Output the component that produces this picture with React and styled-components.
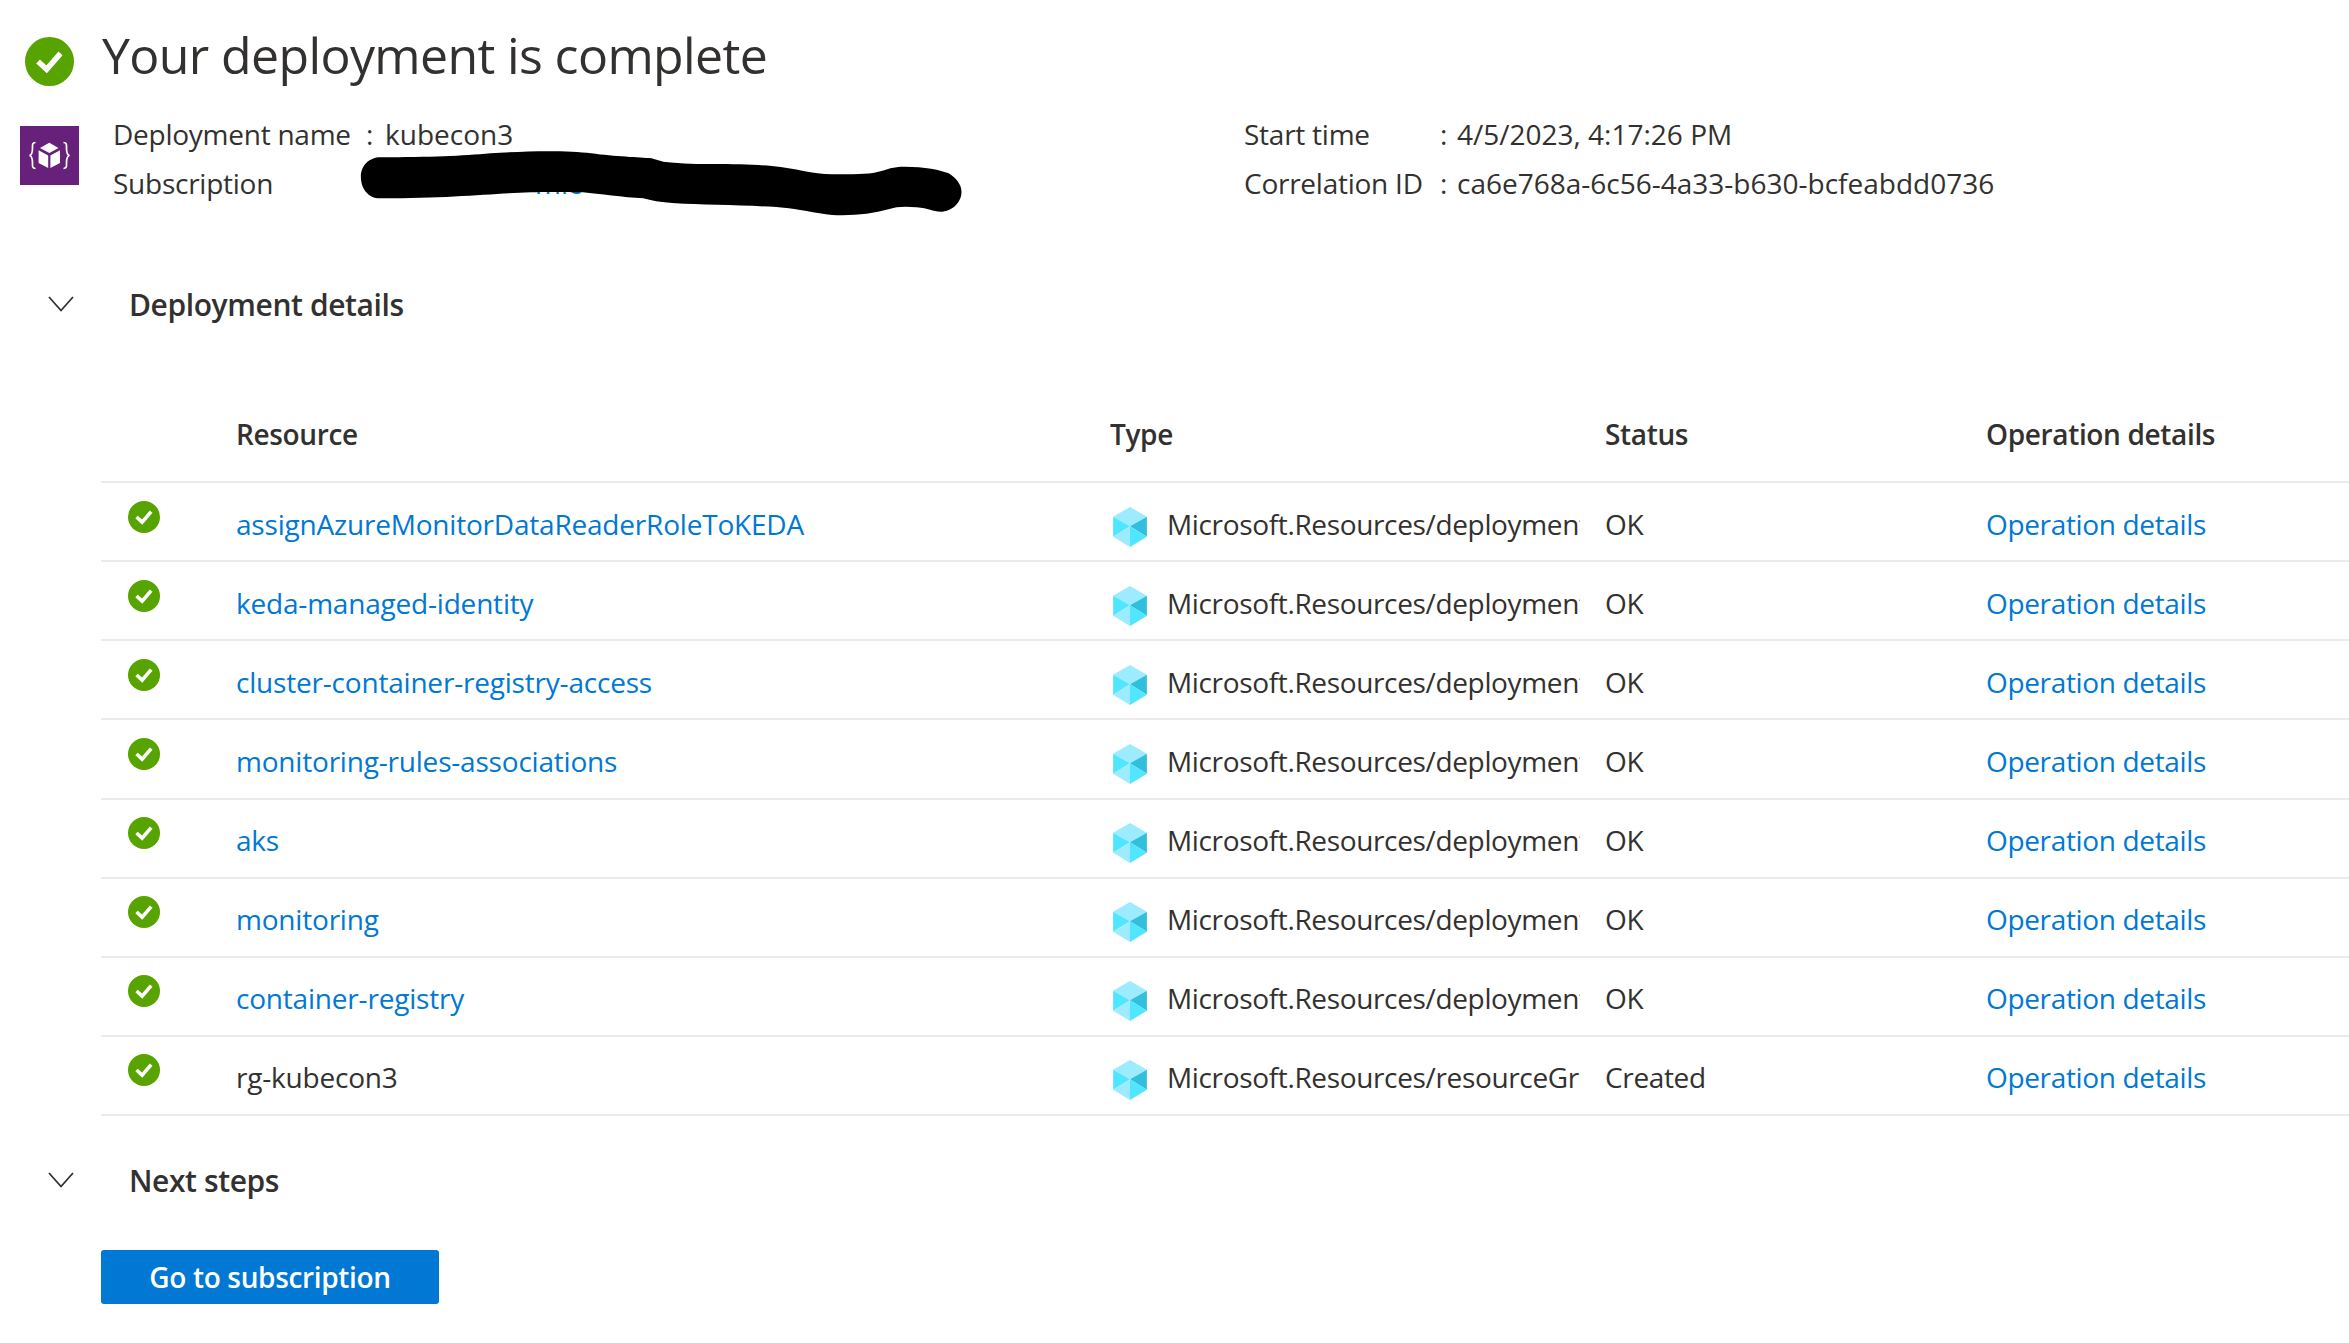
import React from 'react';
import styled, { createGlobalStyle } from 'styled-components';

const GlobalStyle = createGlobalStyle`
  html, body {
    margin: 0;
    padding: 0;
    background: #fff;
  }
  body {
    font-family: "Open Sans", "Noto Sans", sans-serif;
    color: #323130;
  }
`;

const Page = styled.div`
  width: 2349px;
  height: 1343px;
  overflow: hidden;
  background: #fff;
`;

const TitleRow = styled.div`
  display: flex;
  align-items: flex-start;
  gap: 28px;
  padding: 25px 0 0 25px;
  height: 61px;
`;

const TitleIcon = styled.span`
  display: flex;
  margin-top: 12px;
`;

const Title = styled.h1`
  margin: 0;
  font-size: 50px;
  font-weight: 400;
  line-height: 61px;
  letter-spacing: -0.62px;
`;

const Summary = styled.div`
  display: flex;
  padding: 24px 0 0 20px;
  height: 174px;
`;

const SummaryIcon = styled.svg`
  width: 59px;
  height: 59px;
  margin-top: 16px;
  flex: none;
`;

const MetaGrid = styled.div`
  position: relative;
  display: grid;
  grid-template-columns: 1131px 196px 17px 1fr;
  grid-auto-rows: 49px;
  margin-left: 34px;
  flex: 1;
  font-size: 28px;
  line-height: 49px;
`;

const MetaPair = styled.div`
  display: grid;
  grid-template-columns: 253px 19px 1fr;
`;

const MetaLabel = styled.span`
  white-space: nowrap;
  letter-spacing: -0.25px;
`;

const MetaLink = styled.a`
  color: #0078d4;
  padding-left: 150px;
  text-decoration: none;
`;

const Scribble = styled.svg`
  position: absolute;
  left: 237px;
  top: 30px;
  width: 630px;
  height: 80px;
`;

const SectionHeader = styled.div`
  display: flex;
  align-items: center;
  gap: 55px;
  padding-left: 48px;
  height: 40px;
  font-size: 30px;
  font-weight: 600;
  letter-spacing: -0.4px;
`;

const Table = styled.div`
  margin: 63px 0 0 101px;
`;

const Row = styled.div`
  display: grid;
  grid-template-columns: 135px 874px 495px 381px 1fr;
  align-items: center;
  box-sizing: border-box;
  height: 79.125px;
  padding-top: 4px;
  border-bottom: 2px solid #edebe9;
  font-size: 28px;
  letter-spacing: -0.35px;
`;

const HeadRow = styled(Row)`
  height: 96px;
  padding-top: 0;
  font-weight: 600;
`;

const Cell = styled.div`
  white-space: nowrap;
`;

const NameCell = styled(Cell)`
  letter-spacing: -0.2px;
`;

const StatusCell = styled.div`
  display: flex;
  padding: 0 0 14px 27px;
`;

const TypeCell = styled.div`
  display: flex;
  align-items: center;
  gap: 20px;
  padding-left: 3px;
`;

const TypeIcon = styled.svg`
  width: 34px;
  height: 40px;
  margin-top: 6px;
  flex: none;
`;

const TypeText = styled.span`
  display: block;
  width: 413px;
  overflow: hidden;
  white-space: nowrap;
`;

const Link = styled.a`
  color: #0078d4;
  text-decoration: none;
  white-space: nowrap;
`;

const NextSteps = styled(SectionHeader)`
  margin-top: 44px;
`;

const PrimaryButton = styled.button`
  display: block;
  width: 338px;
  height: 54px;
  margin: 50px 0 0 101px;
  padding: 0;
  border: 0;
  border-radius: 3px;
  background: #0078d4;
  color: #fff;
  font-family: inherit;
  font-size: 28px;
  font-weight: 600;
  letter-spacing: -0.35px;
`;

const CheckIcon = ({ size }) => (
  <svg width={size} height={size} viewBox="0 0 24 24">
    <circle cx="12" cy="12" r="12" fill="#57a300" />
    <path d="M6.4 12 L10.6 15.8 L17.4 8" fill="none" stroke="#fff" strokeWidth="2.7" />
  </svg>
);

const Chevron = () => (
  <svg width="26" height="16" viewBox="0 0 26 16">
    <path d="M1 1 L13 14.5 L25 1" fill="none" stroke="#323130" strokeWidth="1.8" />
  </svg>
);

const CubeIcon = () => (
  <TypeIcon viewBox="0 0 98 116">
    <polygon points="49,0 98,28 49,56 0,28" fill="#9cebff" />
    <polygon points="0,28 49,56 0,86" fill="#50e6ff" />
    <polygon points="98,28 49,56 98,86" fill="#32bedd" />
    <polygon points="0,86 49,56 49,116" fill="#9cebff" />
    <polygon points="98,86 49,56 49,116" fill="#50e6ff" />
  </TypeIcon>
);

const resources = [
  { name: 'assignAzureMonitorDataReaderRoleToKEDA', type: 'Microsoft.Resources/deployments', status: 'OK' },
  { name: 'keda-managed-identity', type: 'Microsoft.Resources/deployments', status: 'OK' },
  { name: 'cluster-container-registry-access', type: 'Microsoft.Resources/deployments', status: 'OK' },
  { name: 'monitoring-rules-associations', type: 'Microsoft.Resources/deployments', status: 'OK' },
  { name: 'aks', type: 'Microsoft.Resources/deployments', status: 'OK' },
  { name: 'monitoring', type: 'Microsoft.Resources/deployments', status: 'OK' },
  { name: 'container-registry', type: 'Microsoft.Resources/deployments', status: 'OK' },
  { name: 'rg-kubecon3', type: 'Microsoft.Resources/resourceGroups', status: 'Created', plain: true },
];

export default function App() {
  return (
    <Page>
      <GlobalStyle />
      <TitleRow>
        <TitleIcon>
          <CheckIcon size={49} />
        </TitleIcon>
        <Title>Your deployment is complete</Title>
      </TitleRow>

      <Summary>
        <SummaryIcon viewBox="0 0 59 59">
          <rect width="59" height="59" fill="#68217a" />
          <polygon points="29.3,16.7 38.5,22 29.3,27 20,22" fill="#fff" />
          <polygon points="18.6,24.2 28.2,29.4 28.2,42 18.6,37" fill="#fff" />
          <polygon points="40,24.2 30.4,29.4 30.4,42 40,37" fill="#fff" />
          <path d="M15.5 16.5 C12 16.5 12.5 19 12.5 22 C12.5 26 12 29 9.5 29.5 C12 30 12.5 33 12.5 37 C12.5 40 12 42.5 15.5 42.5" fill="none" stroke="#fff" strokeWidth="1.7" />
          <path d="M43.5 16.5 C47 16.5 46.5 19 46.5 22 C46.5 26 47 29 49.5 29.5 C47 30 46.5 33 46.5 37 C46.5 40 47 42.5 43.5 42.5" fill="none" stroke="#fff" strokeWidth="1.7" />
        </SummaryIcon>
        <MetaGrid>
          <MetaPair>
            <MetaLabel>Deployment name</MetaLabel>
            <span>:</span>
            <span>kubecon3</span>
          </MetaPair>
          <MetaLabel>Start time</MetaLabel>
          <span>:</span>
          <span>4/5/2023, 4:17:26 PM</span>
          <MetaPair>
            <MetaLabel>Subscription</MetaLabel>
            <span />
            <MetaLink href="#">mic</MetaLink>
          </MetaPair>
          <MetaLabel>Correlation ID</MetaLabel>
          <span>:</span>
          <span>ca6e768a-6c56-4a33-b630-bcfeabdd0736</span>
          <Scribble viewBox="0 0 1568 240" preserveAspectRatio="none">
            <path
              d="M27 110 C27 75 50 52 75 52 C200 52 280 48 350 40 C430 33 540 30 600 40 C660 50 720 52 750 55 L780 65 C830 72 870 72 900 72 C960 72 1010 74 1050 78 C1110 84 1150 103 1200 103 C1250 103 1290 103 1310 97 C1340 87 1350 80 1380 80 C1430 80 1470 90 1490 100 C1510 115 1522 135 1522 155 C1522 190 1495 215 1470 215 C1450 215 1440 205 1410 202 C1380 199 1360 200 1340 208 C1300 222 1250 228 1200 225 C1160 220 1110 205 1080 203 C1000 195 880 195 810 190 C770 187 750 182 730 175 C680 172 620 162 580 157 C530 156 480 156 450 157 C350 160 250 175 75 175 C45 175 27 145 27 110 Z"
              fill="#000"
            />
          </Scribble>
        </MetaGrid>
      </Summary>

      <SectionHeader>
        <Chevron />
        Deployment details
      </SectionHeader>

      <Table>
        <HeadRow>
          <Cell />
          <Cell>Resource</Cell>
          <Cell>Type</Cell>
          <Cell>Status</Cell>
          <Cell>Operation details</Cell>
        </HeadRow>
        {resources.map((r) => (
          <Row key={r.name}>
            <StatusCell>
              <CheckIcon size={32} />
            </StatusCell>
            <NameCell>{r.plain ? r.name : <Link href="#">{r.name}</Link>}</NameCell>
            <TypeCell>
              <CubeIcon />
              <TypeText>{r.type}</TypeText>
            </TypeCell>
            <Cell>{r.status}</Cell>
            <Cell>
              <Link href="#">Operation details</Link>
            </Cell>
          </Row>
        ))}
      </Table>

      <NextSteps>
        <Chevron />
        Next steps
      </NextSteps>

      <PrimaryButton>Go to subscription</PrimaryButton>
    </Page>
  );
}
